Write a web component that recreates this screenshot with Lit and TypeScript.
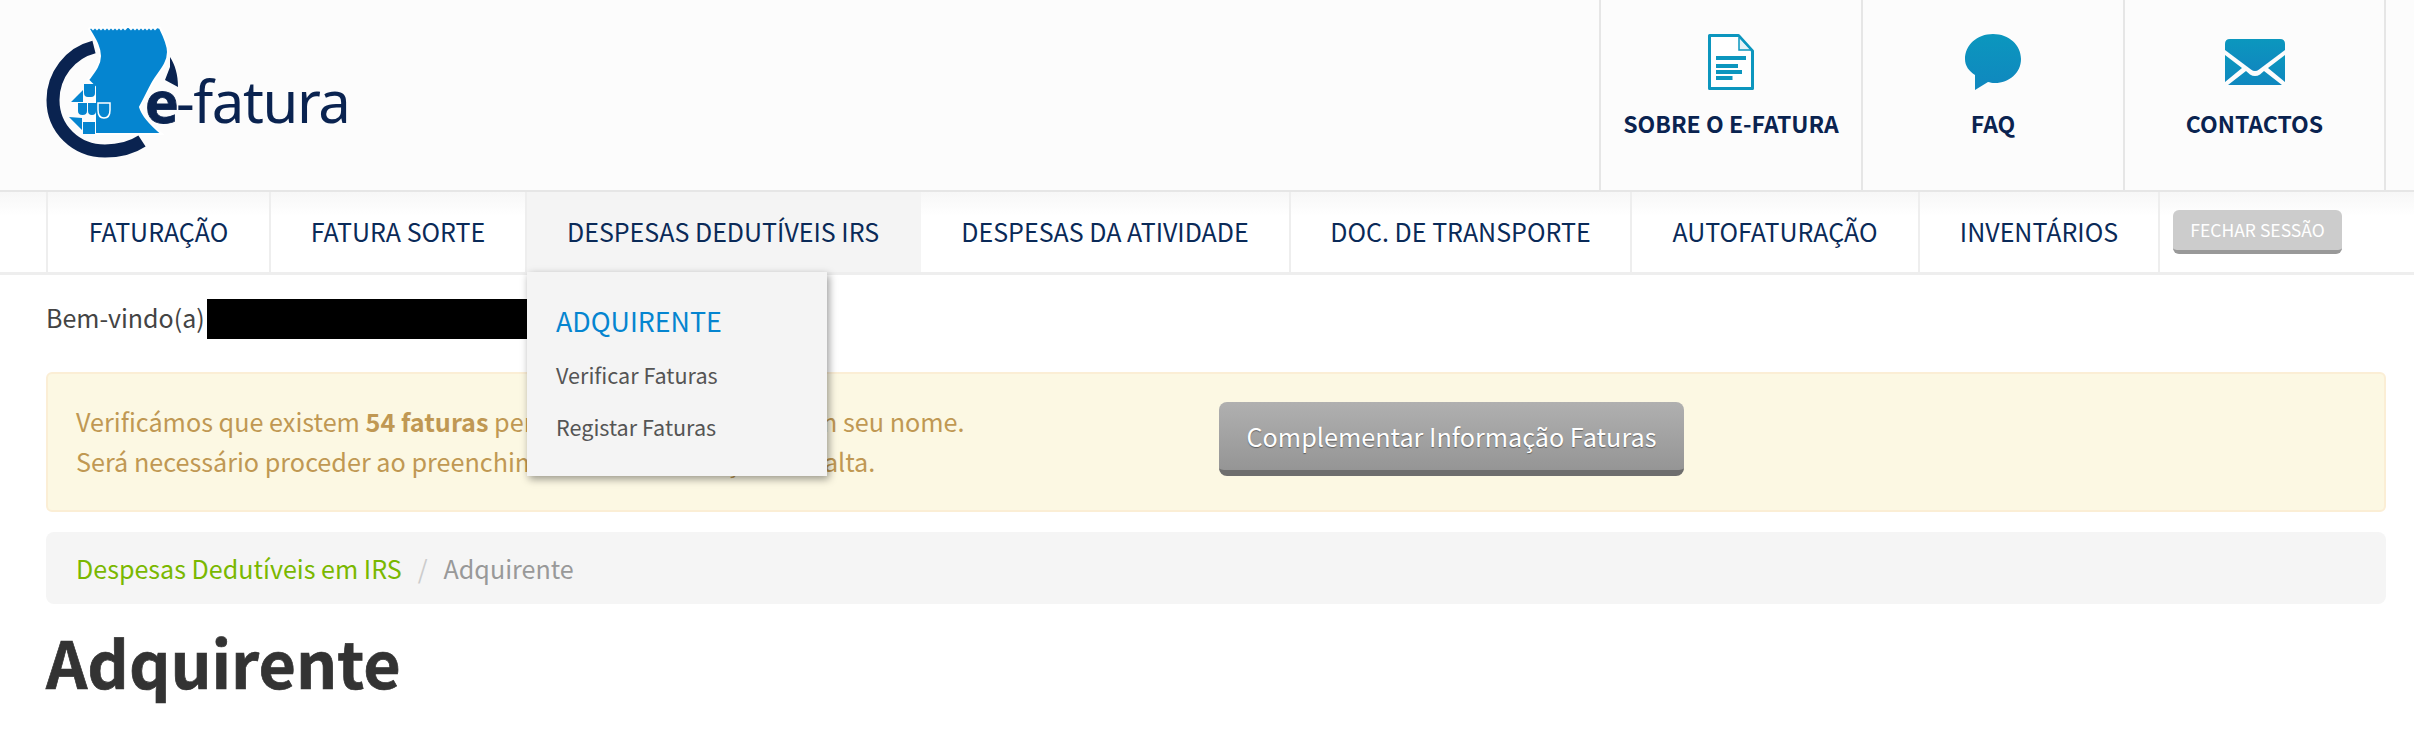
import { LitElement, html, css, svg } from "lit";
import { customElement } from "lit/decorators.js";

const logo = svg`
  <svg class="logo" width="360" height="190" viewBox="0 0 360 190" xmlns="http://www.w3.org/2000/svg">
    <path d="M94 47 C70 53 53 75 53 100 C53 129 76 151 105 151 C120 151 133 147 142 141" fill="none" stroke="#0a2350" stroke-width="13"/>
    <path d="M170 57 C175 65 178 74 178 87 L165 80 L170 67Z" fill="#0a2350"/>
    <path d="M89 29 L91 27 L93 29 L95 27 L97 29 L99 27 L101 29 L103 27 L105 29 L107 27 L109 29 L111 27 L113 29 L115 27 L117 29 L119 27 L121 29 L123 27 L125 29 L127 27 L129 27 L131 29 L133 27 L135 29 L137 27 L139 29 L141 27 L143 29 L145 27 L147 29 L149 27 L151 29 L153 27 L155 29 L157 27 L160 28 C164 36 168 44 168 52 C168 64 159 72 153 82 C148 91 144 100 140 107 C142 114 150 124 162 134 L95 134 L95 87 L88 80 C94 72 100 65 100 56 C100 46 94 38 89 29Z" fill="#0585d0" stroke="#fff" stroke-width="2"/>
    <path d="M71 102 L83 90 V102Z M69 117 L82 118 V130Z M83 122 H95 V134 H83Z M84 84 H95 V93 Q95 97 91 97 H88 Q84 97 84 93Z" fill="#0585d0"/>
    <path d="M78 103 H87 V111 Q87 115 82.500 115 Q78 115 78 111Z M88 103 H96 V111 Q96 115 92 115 Q88 115 88 111Z" fill="#0585d0"/>
    <path d="M98 103 H110 V110 Q110 118 104 118 Q98 118 98 110Z" fill="#0585d0" stroke="#fff" stroke-width="1.500"/>
    <rect x="143" y="88" width="36" height="38" rx="17" fill="#fcfcfc"/>
    <text class="e" x="145" y="123">e</text>
    <text class="fatura" x="176" y="123">-fatura</text>
  </svg>`;

const docIcon = svg`
  <svg width="46" height="56" viewBox="0 0 46 56" xmlns="http://www.w3.org/2000/svg">
    <path d="M1.5 1.5 H30.5 L44.5 17 V54.5 H1.5Z" fill="#fff" stroke="#0c96be" stroke-width="3" stroke-linejoin="round"/>
    <path d="M31 4 V16 H42" fill="#e6f3f7" stroke="#0c96be" stroke-width="1.5"/>
    <path d="M8 22 H38 V26 H8Z M8 30 H30 V34 H8Z M8 36 H34 V40 H8Z M8 42 H24.5 V46 H8Z" fill="#0c96be"/>
  </svg>`;

const bubbleIcon = svg`
  <svg width="56" height="56" viewBox="0 0 56 56" xmlns="http://www.w3.org/2000/svg">
    <defs><linearGradient id="bg" x1="0" y1="0" x2="0" y2="1"><stop offset="0" stop-color="#0b97be"/><stop offset="1" stop-color="#1087bf"/></linearGradient></defs>
    <path d="M28 0 C44 0 56 11 56 25 C56 39 44 49 30 49 C27 49 25 48.500 23 48 L10 56 V41 C4 37 0 32 0 25 C0 11 12 0 28 0Z" fill="url(#bg)"/>
  </svg>`;

const mailIcon = svg`
  <svg width="60" height="46" viewBox="0 0 60 46" xmlns="http://www.w3.org/2000/svg">
    <defs><linearGradient id="mg" x1="0" y1="0" x2="0" y2="1"><stop offset="0" stop-color="#0b97be"/><stop offset="1" stop-color="#1087bf"/></linearGradient></defs>
    <path d="M5 0 H55 Q60 0 60 5 V11 L34 30.500 Q30 33.500 26 30.500 L0 11 V5 Q0 0 5 0Z" fill="url(#mg)"/>
    <path d="M0 16 L17 29 L0 43Z M60 16 L43 29 L60 43Z M3 46 L21 32 L25 35.500 Q30 38.500 35 35.500 L39 32 L57 46Z" fill="url(#mg)"/>
  </svg>`;

@customElement("app-root")
export class AppRoot extends LitElement {
  static styles = css`
    :host { display: block; background: #fff; font-family: "Noto Sans CJK SC", "Noto Sans", sans-serif; color: #333; height: 754px; overflow: hidden; }
    * { box-sizing: border-box; }
    .header { display: flex; height: 192px; background: #fcfcfc; border-bottom: 2px solid #e6e6e6; padding-right: 28px; }
    .brand { flex: 1; }
    .logo { display: block; }
    .logo text { fill: #0a2350; }
    .logo .e { font-family: "Open Sans", sans-serif; font-weight: 700; font-size: 57px; stroke: #0a2350; stroke-width: .8px; }
    .logo .fatura { font-family: "Noto Sans", sans-serif; font-size: 58px; letter-spacing: -1.400px; }
    .tool { width: 262px; border-left: 2px solid #e6e6e6; display: flex; flex-direction: column; align-items: center; padding-top: 34px; color: #0a2350; font-size: 23px; font-weight: 600; line-height: 34px; }
    .tool:last-child { width: 263px; border-right: 2px solid #e6e6e6; }
    .tool .ic { height: 56px; display: flex; align-items: center; margin-bottom: 16px; }
    .nav { display: flex; height: 83px; padding: 0 46px; border-bottom: 3px solid #eee; background: linear-gradient(#f7f7f7, #fff 30%); }
    .item { position: relative; display: flex; align-items: center; justify-content: center; height: 80px; border-right: 2px solid #eee; color: #0a2a58; font-size: 25px; line-height: 36px; padding-bottom: 2px; }
    .item:first-child { border-left: 2px solid #eee; }
    .item.active { background: #f4f4f4; border-right-color: #f4f4f4; }
    .w1 { width: 225px; } .w2 { width: 256px; } .w3 { width: 394px; } .w4 { width: 370px; } .w5 { width: 341px; } .w6 { width: 288px; } .w7 { width: 240px; }
    .logout { margin: 18px 0 0 13px; width: 169px; height: 44px; border: 0; border-bottom: 4px solid #999; border-radius: 6px; background: #ccc; color: #fff; font: 400 17.500px/38px "Noto Sans CJK SC", sans-serif; padding: 0; }
    .menu { position: absolute; z-index: 2; left: 0; top: 80px; width: 300px; height: 204px; background: #f4f4f4; box-shadow: 2px 3px 8px rgba(0,0,0,.4); padding: 30px 29px; }
    .menu .h { color: #0585d0; font-size: 26.800px; line-height: 38px; }
    .menu .l { color: #555; font-size: 21.600px; line-height: 32px; margin-top: 20px; }
    .menu .h + .l { margin-top: 19px; }
    .content { padding: 0 28px 0 46px; }
    .welcome { display: flex; align-items: center; height: 97px; padding-bottom: 10px; font-size: 25px; color: #444; }
    .welcome i { display: block; width: 321px; height: 40px; background: #000; margin: 0 0 0 2px; }
    .welcome span { line-height: 36px; margin-bottom: 3px; }
    .alert { display: flex; align-items: flex-start; height: 140px; background: #fcf8e3; border: 2px solid #fbeed5; border-radius: 6px; color: #c09853; font-size: 25.200px; line-height: 40px; padding: 27px 0 0 28px; }
    .alert .msg { width: 1143px; }
    .cta { width: 465px; height: 74px; margin-top: 1px; border: 0; border-bottom: 6px solid #6e6e6e; border-radius: 8px; background: linear-gradient(#b0b0b0, #959595); color: #fff; font: 400 25.200px/36px "Noto Sans CJK SC", sans-serif; text-shadow: 0 1px 1px rgba(0,0,0,.4); padding: 0; }
    .crumb { margin-top: 20px; height: 72px; background: #f5f5f5; border-radius: 8px; padding-left: 30px; display: flex; align-items: center; gap: 16px; font-size: 25.100px; color: #999; }
    .crumb a { color: #7ab800; }
    .crumb .sep { color: #ccc; }
    h1 { margin: 14px 0 0; font-size: 64.500px; line-height: 86px; font-weight: 700; color: #333; -webkit-text-stroke: .7px #333; }
  `;

  render() {
    return html`
      <div class="header">
        <div class="brand">${logo}</div>
        <div class="tool"><div class="ic">${docIcon}</div><span>SOBRE O E-FATURA</span></div>
        <div class="tool"><div class="ic">${bubbleIcon}</div><span>FAQ</span></div>
        <div class="tool"><div class="ic">${mailIcon}</div><span>CONTACTOS</span></div>
      </div>
      <div class="nav">
        <div class="item w1">FATURAÇÃO</div>
        <div class="item w2">FATURA SORTE</div>
        <div class="item active w3">DESPESAS DEDUTÍVEIS IRS
          <div class="menu">
            <div class="h">ADQUIRENTE</div>
            <div class="l">Verificar Faturas</div>
            <div class="l">Registar Faturas</div>
          </div>
        </div>
        <div class="item w4">DESPESAS DA ATIVIDADE</div>
        <div class="item w5">DOC. DE TRANSPORTE</div>
        <div class="item w6">AUTOFATURAÇÃO</div>
        <div class="item w7">INVENTÁRIOS</div>
        <button class="logout">FECHAR SESSÃO</button>
      </div>
      <div class="content">
        <div class="welcome"><span>Bem-vindo(a)</span><i></i></div>
        <div class="alert">
          <div class="msg">Verificámos que existem <b>54 faturas</b> pendentes de informação em seu nome.<br />Será necessário proceder ao preenchimento da informação em falta.</div>
          <button class="cta">Complementar Informação Faturas</button>
        </div>
        <div class="crumb"><a>Despesas Dedutíveis em IRS</a><span class="sep">/</span><span>Adquirente</span></div>
        <h1>Adquirente</h1>
      </div>
    `;
  }
}
